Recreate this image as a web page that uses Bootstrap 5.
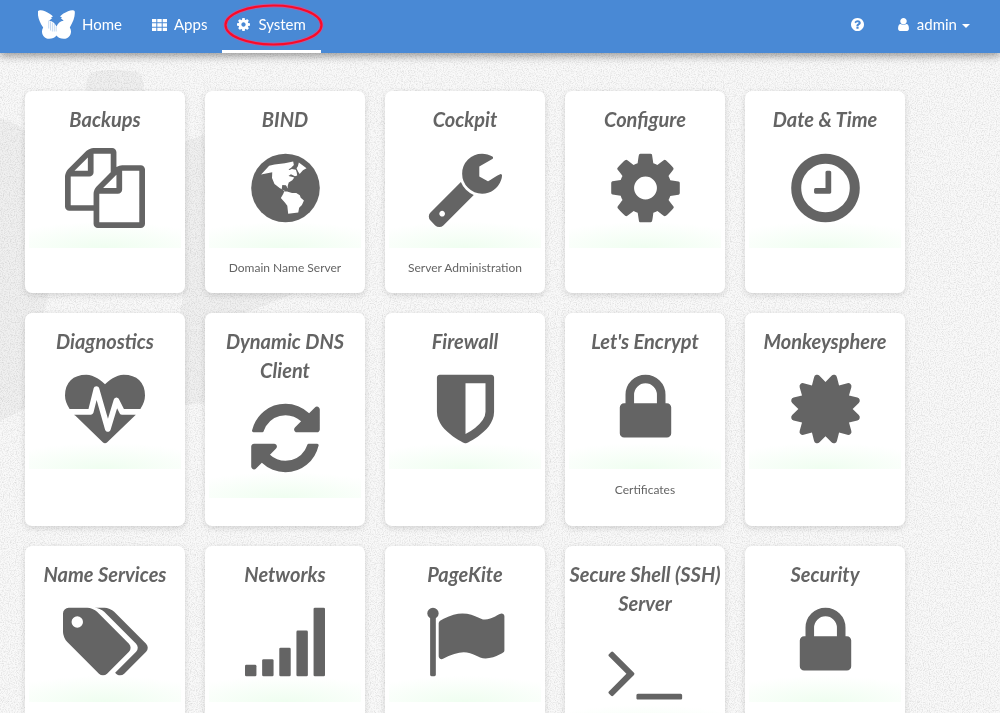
<!DOCTYPE html>
<html lang="en">
<head>
<meta charset="utf-8">
<meta name="viewport" content="width=device-width, initial-scale=1">
<title>System</title>
<link href="https://cdn.jsdelivr.net/npm/bootstrap@5.3.0/dist/css/bootstrap.min.css" rel="stylesheet">
<style>
body { font-family: Lato, "Liberation Sans", sans-serif; background: #f9f9f9; color: #646464; height: 713px; overflow: hidden; }
.backdrop { position: fixed; inset: 0; width: 100%; height: 100%; z-index: -1; }
.topbar { height: 53px; background: #4989d5; box-shadow: 0 3px 8px rgba(0,0,0,.38); font-size: 15px; }
.topbar .nav-link { color: #fff; height: 53px; padding: 0 15px 4px; position: relative; }
.topbar .nav-link.active { box-shadow: inset 0 -3px #fff; }
.topbar .brand { padding-left: 38px; }
.topbar .user-link { padding-left: 19px; padding-right: 14px; }
.ico { width: 13px; height: 13px; fill: currentColor; display: block; }
.ico-user { width: 11px; }
.glyph-gap { margin-right: 7px; flex-shrink: 0; }
.caret { border: 4px solid transparent; border-top-color: #fff; border-bottom: 0; margin-left: 5px; margin-top: 3px; }
.highlight { position: absolute; left: 0; top: 2px; width: 104px; height: 46px; }
.tiles { display: grid; grid-template-columns: repeat(5, 160px); grid-template-rows: 202px 213px 213px; gap: 20px; padding: 38px 25px 0; height: 660px; overflow: hidden; }
.tile { border: 0; border-radius: 7px; background: #fff; padding: 14px 4px 0; text-align: center; box-shadow: 0 2px 6px rgba(0,0,0,.14); color: #646464; }
.tile h2 { font-size: 20px; font-weight: 700; font-style: italic; line-height: 29px; margin: 0 -1px; }
.pic { height: 114px; padding-top: 13.9px; background: radial-gradient(ellipse 116px 26px at 50% 100%, #effef0, rgba(255,255,255,0)); }
.tile:nth-child(n+6) .pic { margin-top: -.8px; }
.pic svg { display: block; width: 80px; height: 80px; fill: #646464; margin: 0 auto; overflow: visible; transform: translateX(.5px); }
.pic svg.snug { transform: none; }
.pic svg.pole { transform: translateX(-.6px); }
.pic svg.wide { width: 85.7px; transform: translateX(1px); }
.tile p { font-size: 12px; line-height: 17px; margin: 11px 0 0; }
.tile:nth-child(n+6) p { margin-top: 12px; }
</style>
<script src="https://cdn.jsdelivr.net/npm/bootstrap@5.3.0/dist/js/bootstrap.bundle.min.js"></script>
</head>
<body>
<svg class="backdrop" aria-hidden="true">
  <defs>
    <filter id="grain" x="0" y="0" width="100%" height="100%">
      <feTurbulence type="fractalNoise" baseFrequency="0.85" numOctaves="2" seed="4"/>
      <feColorMatrix values="0 0 0 0 0  0 0 0 0 0  0 0 0 0 0  0 0 0 .24 -.1"/>
    </filter>
  </defs>
  <g fill="#000" fill-opacity=".035">
    <path d="M87 80q1-8 10-9 18-2 36 0 9 0 10 9l2 16H84z"/>
    <path d="M-10 116q22 3 38 17l20 165q-2 12-8 20l-15 91-35 17z"/>
    <path d="M183 142q8-3 20-7l100 20-8 138q-20 9-50 20l-40 90-20 2-4-85q-3-9 2-20z"/>
  </g>
  <rect width="100%" height="100%" filter="url(#grain)"/>
</svg>
<svg width="0" height="0" class="position-absolute">
  <symbol id="cog" viewBox="0 0 1792 1792"><path d="M1152 896q0-106-75-181t-181-75-181 75-75 181 75 181 181 75 181-75 75-181zm512-109v222q0 12-8 23t-20 13l-185 28q-19 54-39 91 35 50 107 138 10 12 10 25t-9 23q-27 37-99 108t-94 71q-12 0-26-9l-138-108q-44 23-91 38-16 136-29 186-7 28-36 28h-222q-14 0-24.500-8.500t-11.500-21.500l-28-184q-49-16-90-37l-141 107q-10 9-25 9-14 0-25-11-126-114-165-168-7-10-7-23 0-12 8-23 15-21 51-66.500t54-70.500q-27-50-41-99l-183-27q-13-2-21-12.500t-8-23.500v-222q0-12 8-23t19-13l186-28q14-46 39-92-40-57-107-138-10-12-10-24 0-10 9-23 26-36 98.500-107.500t94.500-71.500q13 0 26 10l138 107q44-23 91-38 16-136 29-186 7-28 36-28h222q14 0 24.500 8.500t11.500 21.500l28 184q49 16 90 37l142-107q9-9 24-9 13 0 25 10 129 119 165 170 7 8 7 22 0 12-8 23-15 21-51 66.500t-54 70.500q26 50 41 98l183 28q13 2 21 12.500t8 23.500z"/></symbol>
  <symbol id="lock" viewBox="0 0 1792 1792"><path d="M640 768h512v-192q0-106-75-181t-181-75-181 75-75 181v192zm832 96v576q0 40-28 68t-68 28h-960q-40 0-68-28t-28-68v-576q0-40 28-68t68-28h32v-192q0-184 132-316t316-132 316 132 132 316v192h32q40 0 68 28t28 68z"/></symbol>
</svg>

<nav class="topbar d-flex align-items-stretch justify-content-between position-relative">
  <div class="nav flex-nowrap">
    <a class="nav-link brand d-flex align-items-center" href="#">
      <svg width="37" height="30" viewBox="0 0 37 30" fill="#fff" class="glyph-gap"><path d="M0 1.200C1-.2 4-.2 7 1.200c3.500 1.600 6.200 3.300 8 5.200l-2.300 1.100 1.600.6-3.200 2.700c3.500.2 5.800 2.600 7.400 5.700 1.500-3.100 3.600-5.500 7.200-5.700l-3-2.700 1.600-.6L22 6.400C24 4.300 26.500 2.700 30 1.200c3-1.400 6-1.400 6.700 0 .7 4.600-1.300 10.600-4.900 16.200 3 4.300.3 11.400-6 11.400-3.200 0-5.700-1-7.300-3.200-1.700 2.200-4.200 3.200-7.300 3.200-6.200 0-9-6.900-6-11.400C1.300 11.800-.7 5.800 0 1.200z"/><path d="M10.700 10.500v8M12.500 11.500v9M14.400 12.500v9M16.300 14v7.500M18.200 16.500v5" stroke="#4989d5" stroke-width=".55" stroke-opacity=".6"/></svg>
      <span>Home</span>
    </a>
    <a class="nav-link d-flex align-items-center" href="#">
      <svg class="glyph-gap" width="15" height="12" viewBox="0 0 15 12" fill="#fff"><path d="M0 0h4.300v3.300H0zm5.300 0h4.400v3.300H5.300zm5.400 0H15v3.300h-4.300zM0 4.300h4.300v3.400H0zm5.300 0h4.400v3.400H5.300zm5.400 0H15v3.400h-4.300zM0 8.700h4.300V12H0zm5.300 0h4.400V12H5.300zm5.400 0H15V12h-4.300z"/></svg>
      <span>Apps</span>
    </a>
    <a class="nav-link active d-flex align-items-center" href="#">
      <svg class="ico me-2" viewBox="128 128 1536 1536"><use href="#cog" width="1792" height="1792"/></svg>
      <span>System</span>
      <svg class="highlight" viewBox="0 0 104 46" fill="none"><ellipse cx="51.500" cy="23" rx="48" ry="19.500" stroke="#c9549b" stroke-width="3.800" opacity=".8"/><ellipse cx="51.500" cy="23" rx="48" ry="19.500" stroke="#fb0a26" stroke-width="2.200"/></svg>
    </a>
  </div>
  <div class="nav flex-nowrap me-3">
    <a class="nav-link d-flex align-items-center" href="#" aria-label="Help">
      <svg class="ico" viewBox="128 128 1536 1536"><path d="M1024 1376v-192q0-14-9-23t-23-9h-192q-14 0-23 9t-9 23v192q0 14 9 23t23 9h192q14 0 23-9t9-23zm256-672q0-88-55.500-163t-138.500-116-170-41q-243 0-371 213-15 24 8 42l132 100q7 6 19 6 16 0 25-12 53-68 86-92 34-24 86-24 48 0 85.500 26t37.500 59q0 38-20 61t-68 45q-63 28-115.500 86.500t-52.500 125.500v36q0 14 9 23t23 9h192q14 0 23-9t9-23q0-19 21.500-49.500t54.500-49.500q32-18 49-28.500t46-35 44.500-48 28-60.500 12.500-81zm384 192q0 209-103 385.500t-279.500 279.500-385.500 103-385.500-103-279.500-279.500-103-385.500 103-385.500 279.500-279.500 385.500-103 385.500 103 279.500 279.500 103 385.500z"/></svg>
    </a>
    <a class="nav-link user-link d-flex align-items-center" href="#">
      <svg class="ico ico-user me-2" viewBox="256 128 1280 1536"><path d="M1536 1399q0 109-62.500 187t-150.500 78h-854q-88 0-150.500-78t-62.500-187q0-85 8.500-160.500t31.500-152 58.500-131 94-89 134.500-34.500q131 128 313 128t313-128q76 0 134.500 34.500t94 89 58.500 131 31.500 152 8.500 160.500zm-256-887q0 159-112.500 271.500t-271.500 112.500-271.500-112.500-112.500-271.500 112.500-271.500 271.500-112.500 271.500 112.500 112.500 271.500z"/></svg>
      <span>admin</span><i class="caret"></i>
    </a>
  </div>
</nav>

<main class="tiles">
  <a class="card tile text-decoration-none" href="#"><h2>Backups</h2>
    <div class="pic"><svg class="snug" viewBox="0 0 1792 1792"><path d="M1696 384q40 0 68 28t28 68v1216q0 40-28 68t-68 28h-960q-40 0-68-28t-28-68v-288h-544q-40 0-68-28t-28-68v-672q0-40 20-88t48-76l408-408q28-28 76-48t88-20h416q40 0 68 28t28 68v328q68-40 128-40h416zm-544 213l-299 299h299v-299zm-640-384l-299 299h299v-299zm196 647l316-316v-416h-384v416q0 40-28 68t-68 28h-416v640h512v-256q0-40 20-88t48-76zm956 804v-1152h-384v416q0 40-28 68t-68 28h-416v640h896z"/></svg></div></a>
  <a class="card tile text-decoration-none" href="#"><h2>BIND</h2>
    <div class="pic"><svg viewBox="0 0 1792 1792"><circle cx="896" cy="896" r="768"/><path fill="#fff" d="M350 592L530 396l120-29 230-28 188-34 15 75-60 60-60 40 25 15 50-25 90 16 20 60 10 72-50 12-90-40-55 35 70 20 60 15-45 60-80 55-24 80 12 56-52-76-80-5-12 90 60 54h60l110 36 95-4 80 50 20 60 72 58-45 105-62 62-20 105-226 28-20-180-50-65-94-110 52-90 30-70-110-65-115-90-55-130 5-130z"/><path fill="#fff" d="M1195 325l172 131-80 45-75 82-35-55-34-72 30-50z"/></svg></div><p>Domain Name Server</p></a>
  <a class="card tile text-decoration-none" href="#"><h2>Cockpit</h2>
    <div class="pic"><svg class="snug" viewBox="0 0 1792 1792"><path d="M448 1472q0-26-19-45t-45-19-45 19-19 45 19 45 45 19 45-19 19-45zm644-420l-682 682q-37 37-90 37-52 0-91-37l-106-108q-38-36-38-90 0-53 38-91l681-681q39 98 114.500 173.500t173.500 114.500zm634-435q0 39-23 106-47 134-164.500 217.500t-258.500 83.500q-185 0-316.500-131.500t-131.500-316.500 131.500-316.500 316.500-131.500q58 0 121.500 16.500t107.500 46.500q16 11 16 28t-16 28l-293 169v224l193 107q5-3 79-48.500t135.500-81 70.500-35.500q15 0 23.500 10t8.500 25z"/></svg></div><p>Server Administration</p></a>
  <a class="card tile text-decoration-none" href="#"><h2>Configure</h2>
    <div class="pic"><svg><use href="#cog"/></svg></div></a>
  <a class="card tile text-decoration-none" href="#"><h2>Date &amp; Time</h2>
    <div class="pic"><svg viewBox="0 0 1792 1792"><path d="M1024 544v448q0 14-9 23t-23 9h-320q-14 0-23-9t-9-23v-64q0-14 9-23t23-9h224v-352q0-14 9-23t23-9h64q14 0 23 9t9 23zm416 352q0-148-73-273t-198-198-273-73-273 73-198 198-73 273 73 273 198 198 273 73 273-73 198-198 73-273zm224 0q0 209-103 385.500t-279.500 279.500-385.500 103-385.500-103-279.500-279.500-103-385.500 103-385.500 279.500-279.500 385.500-103 385.500 103 279.500 279.500 103 385.500z"/></svg></div></a>

  <a class="card tile text-decoration-none" href="#"><h2>Diagnostics</h2>
    <div class="pic"><svg class="snug" viewBox="0 -128 1792 1792"><path d="M1280 896h305q-5 6-10 10.500t-9 7.500l-3 4-623 600q-18 18-44 18t-44-18l-624-602q-5-2-21-20h369q22 0 39.500-13.500t22.500-34.500l70-281 190 667q6 20 23 33t39 13q21 0 38-13t23-33l146-485 56 112q18 35 57 35zm512-428q0 145-103 300h-369l-111-221q-8-17-25.500-27t-36.500-8q-45 5-56 46l-129 430-196-686q-6-20-23.500-33t-39.500-13-39 13.500-22 34.500l-116 464h-423q-103-155-103-300 0-220 127-344t351-124q62 0 126.500 21.500t120 58 95.500 68.500 76 68q36-36 76-68t95.500-68.500 120-58 126.500-21.500q224 0 351 124t127 344z"/></svg></div></a>
  <a class="card tile text-decoration-none" href="#"><h2>Dynamic DNS Client</h2>
    <div class="pic"><svg viewBox="0 0 1792 1792"><path d="M1639 1056q0 5-1 7-64 268-268 434.500t-478 166.500q-146 0-282.500-55t-243.500-157l-129 129q-19 19-45 19t-45-19-19-45v-448q0-26 19-45t45-19h448q26 0 45 19t19 45-19 45l-137 137q71 66 161 102t187 36q134 0 250-65t186-179q11-17 53-117 8-23 30-23h192q13 0 22.500 9.500t9.500 22.500zm25-800v448q0 26-19 45t-45 19h-448q-26 0-45-19t-19-45 19-45l138-138q-148-137-349-137-134 0-250 65t-186 179q-11 17-53 117-8 23-30 23h-199q-13 0-22.500-9.500t-9.500-22.500v-7q65-268 270-434.500t480-166.500q146 0 284 55.500t245 156.500l130-129q19-19 45-19t45 19 19 45z"/></svg></div></a>
  <a class="card tile text-decoration-none" href="#"><h2>Firewall</h2>
    <div class="pic"><svg viewBox="0 0 1792 1792"><path d="M1344 960v-640h-448v1137q119-63 213-137 235-184 235-360zm192-768v768q0 86-33.500 170.500t-83 150-118 127.500-126.500 103-121 77.500-89.500 49.500-42.500 20q-12 6-26 6t-26-6q-16-7-42.500-20t-89.500-49.500-121-77.500-126.500-103-118-127.500-83-150-33.500-170.500v-768q0-26 19-45t45-19h1152q26 0 45 19t19 45z"/></svg></div></a>
  <a class="card tile text-decoration-none" href="#"><h2>Let's Encrypt</h2>
    <div class="pic"><svg><use href="#lock"/></svg></div><p>Certificates</p></a>
  <a class="card tile text-decoration-none" href="#"><h2>Monkeysphere</h2>
    <div class="pic"><svg viewBox="0 0 1792 1792"><path d="M1504 896l138 135q30 28 20 70-12 41-52 51l-188 48 53 186q12 41-19 70-29 31-70 19l-186-53-48 188q-10 40-51 52-12 2-19 2-31 0-51-22l-135-138-135 138q-28 30-70 20-41-11-51-52l-48-188-186 53q-41 12-70-19-31-29-19-70l53-186-188-48q-40-10-52-51-10-42 20-70l138-135-138-135q-30-28-20-70 12-41 52-51l188-48-53-186q-12-41 19-70 29-31 70-19l186 53 48-188q10-41 51-51 41-12 70 19l135 139 135-139q29-30 70-19 41 10 51 51l48 188 186-53q41-12 70 19 31 29 19 70l-53 186 188 48q40 10 52 51 10 42-20 70z"/></svg></div></a>

  <a class="card tile text-decoration-none" href="#"><h2>Name Services</h2>
    <div class="pic"><svg class="wide" viewBox="0 0 1920 1792"><path d="M448 448q0-53-37.500-90.500t-90.500-37.500-90.500 37.500-37.500 90.500 37.500 90.500 90.500 37.500 90.500-37.500 37.500-90.500zm1067 576q0 53-37 90l-491 492q-39 37-91 37-53 0-90-37l-715-716q-38-37-64.500-101t-26.500-117v-416q0-52 38-90t90-38h416q53 0 117 26.500t102 64.500l715 714q37 39 37 91zm384 0q0 53-37 90l-491 492q-39 37-91 37-36 0-59-14t-53-45l470-470q37-37 37-90 0-52-37-91l-715-714q-38-38-102-64.500t-117-26.500h224q53 0 117 26.500t102 64.500l715 714q37 39 37 91z"/></svg></div></a>
  <a class="card tile text-decoration-none" href="#"><h2>Networks</h2>
    <div class="pic"><svg class="snug" viewBox="0 0 1792 1792"><rect y="1408" width="256" height="256" rx="30"/><rect x="384" y="1280" width="256" height="384" rx="30"/><rect x="768" y="1024" width="256" height="640" rx="30"/><rect x="1152" y="640" width="256" height="1024" rx="30"/><rect x="1536" y="128" width="256" height="1536" rx="30"/></svg></div></a>
  <a class="card tile text-decoration-none" href="#"><h2>PageKite</h2>
    <div class="pic"><svg class="pole" viewBox="0 0 1792 1792"><path d="M320 256q0 72-64 110v1266q0 13-9.500 22.500t-22.500 9.500h-64q-13 0-22.500-9.500t-9.500-22.500v-1266q-64-38-64-110 0-53 37.500-90.500t90.500-37.500 90.500 37.500 37.500 90.500zm1472 64v763q0 25-12.500 38.500t-39.500 27.500q-215 116-369 116-61 0-123.500-22t-108.500-48-115.500-48-142.500-22q-192 0-464 146-17 9-33 9-26 0-45-19t-19-45v-742q0-32 31-55 21-14 79-43 236-120 421-120 107 0 200 29t219 88q38 19 88 19 54 0 117.500-21t110-47 88-47 54.500-21q26 0 45 19t19 45z"/></svg></div></a>
  <a class="card tile text-decoration-none" href="#"><h2>Secure Shell (SSH) Server</h2>
    <div class="pic"><svg class="snug" viewBox="0 0 1792 1792"><path d="M649 983l-466 466q-10 10-23 10t-23-10l-50-50q-10-10-10-23t10-23l393-393-393-393q-10-10-10-23t10-23l50-50q10-10 23-10t23 10l466 466q10 10 10 23t-10 23zm1079 457v64q0 14-9 23t-23 9h-960q-14 0-23-9t-9-23v-64q0-14 9-23t23-9h960q14 0 23 9t9 23z"/></svg></div></a>
  <a class="card tile text-decoration-none" href="#"><h2>Security</h2>
    <div class="pic"><svg><use href="#lock"/></svg></div></a>
</main>
</body>
</html>
